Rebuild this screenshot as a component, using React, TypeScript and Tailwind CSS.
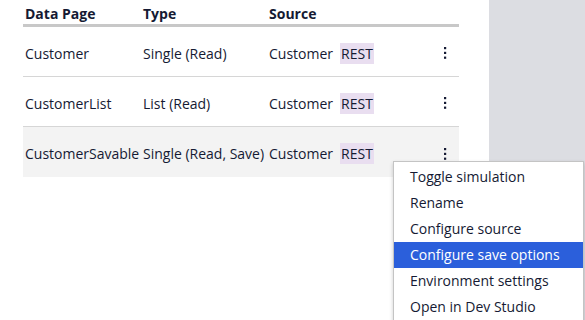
import React from 'react';

const rows = [
  { name: 'Customer', type: 'Single (Read)', source: 'Customer', selected: false },
  { name: 'CustomerList', type: 'List (Read)', source: 'Customer', selected: false },
  { name: 'CustomerSavable', type: 'Single (Read, Save)', source: 'Customer', selected: true },
];

const menuItems = [
  'Toggle simulation',
  'Rename',
  'Configure source',
  'Configure save options',
  'Environment settings',
  'Open in Dev Studio',
];

const Kebab: React.FC = () => (
  <svg width="4" height="14" viewBox="0 0 4 14" className="text-[#151a33]">
    <rect x="1" y="1" width="2.2" height="2.2" fill="currentColor" />
    <rect x="1" y="5.8" width="2.2" height="2.2" fill="currentColor" />
    <rect x="1" y="10.6" width="2.2" height="2.2" fill="currentColor" />
  </svg>
);

const App: React.FC = () => {
  return (
    <div
      className="relative flex w-[585px] h-[320px] bg-white overflow-hidden text-[14px] text-[#151a33]"
      style={{ fontFamily: '"Open Sans", "Noto Sans", sans-serif' }}
    >
      {/* Table area */}
      <div className="w-[489px] pl-[23px] pr-[30px]">
        <div className="grid grid-cols-[118px_126px_1fr_16px] items-center h-[27px] pt-[3px] border-b-[3px] border-[#c8c8c8] font-bold pl-[2px]">
          <span>Data Page</span>
          <span>Type</span>
          <span>Source</span>
          <span />
        </div>
        {rows.map((r, i) => (
          <div
            key={r.name}
            className={`grid grid-cols-[118px_126px_1fr_16px] items-center h-[50px] pt-[3px] pl-[2px] ${
              r.selected ? 'bg-[#f3f3f3]' : ''
            } ${i < rows.length - 1 ? 'border-b border-[#d6d6d6]' : ''}`}
          >
            <span className="whitespace-nowrap">{r.name}</span>
            <span className="whitespace-nowrap">{r.type}</span>
            <span className="flex items-center whitespace-nowrap">
              {r.source}
              <span className="ml-[7px] px-[1px] h-[21px] leading-[21px] bg-[#e9def0]">REST</span>
            </span>
            <span className="flex justify-start">
              <Kebab />
            </span>
          </div>
        ))}
      </div>

      {/* Right panel */}
      <div className="flex-1 bg-[#dcdde2]" />

      {/* Context menu */}
      <div className="absolute left-[393px] top-[161px] w-[191px] bg-white border border-[#c4c4c4] shadow-[0_2px_4px_rgba(0,0,0,0.2)] py-[2px]">
        {menuItems.map((m) => (
          <div
            key={m}
            className={`h-[26px] leading-[26px] pl-[16px] whitespace-nowrap ${
              m === 'Configure save options' ? 'bg-[#2b5fdb] text-white' : ''
            }`}
          >
            {m}
          </div>
        ))}
      </div>
    </div>
  );
};

export default App;
